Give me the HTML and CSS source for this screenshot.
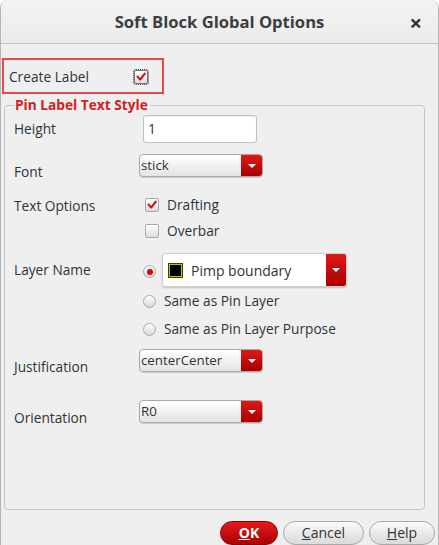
FILE: index.html
```html
<!DOCTYPE html>
<html>
<head>
<meta charset="utf-8">
<link rel="stylesheet" href="styles.css">
</head>
<body>
<div class="window">
  <div class="titlebar">
    <div class="tb-spacer"></div>
    <div class="title">Soft Block Global Options</div>
    <div class="tb-close">×</div>
  </div>
  <div class="content">
    <div class="create-row">
      <span class="lbl">Create Label</span>
      <span class="cb cb-focus"><svg viewBox="0 0 14 14" width="14" height="14"><path d="M3 6.5 L6 10 L11.5 3" fill="none" stroke="#d01010" stroke-width="2.4" stroke-linecap="round" stroke-linejoin="round"/></svg></span>
    </div>
    <fieldset class="group">
      <legend class="legend">Pin Label Text Style</legend>
      <div class="row r-height">
        <span class="lbl col-label">Height</span>
        <div class="input">1</div>
      </div>
      <div class="row r-font">
        <span class="lbl col-label low">Font</span>
        <div class="combo"><span class="combo-text">stick</span><span class="combo-btn"><span class="tri"></span></span></div>
      </div>
      <div class="row r-draft">
        <span class="lbl col-label lowish">Text Options</span>
        <span class="cb-wrap"><span class="cb"><svg viewBox="0 0 14 14" width="14" height="14"><path d="M3 6.5 L6 10 L11.5 3" fill="none" stroke="#d01010" stroke-width="2.4" stroke-linecap="round" stroke-linejoin="round"/></svg></span><span class="lbl">Drafting</span></span>
      </div>
      <div class="row r-overbar">
        <span class="col-label"></span>
        <span class="cb-wrap"><span class="cb"></span><span class="lbl">Overbar</span></span>
      </div>
      <div class="row r-layer">
        <span class="lbl col-label">Layer Name</span>
        <span class="radio on"></span>
        <div class="layer-combo">
          <span class="swatch"></span>
          <span class="layer-text">Pimp boundary</span>
          <span class="combo-btn tall"><span class="tri"></span></span>
        </div>
      </div>
      <div class="row r-same1">
        <span class="col-label"></span>
        <span class="radio"></span><span class="lbl">Same as Pin Layer</span>
      </div>
      <div class="row r-same2">
        <span class="col-label"></span>
        <span class="radio"></span><span class="lbl">Same as Pin Layer Purpose</span>
      </div>
      <div class="row r-just">
        <span class="lbl col-label low">Justification</span>
        <div class="combo"><span class="combo-text">centerCenter</span><span class="combo-btn"><span class="tri"></span></span></div>
      </div>
      <div class="row r-orient">
        <span class="lbl col-label low">Orientation</span>
        <div class="combo"><span class="combo-text">R0</span><span class="combo-btn"><span class="tri"></span></span></div>
      </div>
    </fieldset>
    <div class="buttons">
      <button class="btn btn-ok"><u>O</u>K</button>
      <button class="btn btn-cancel"><u>C</u>ancel</button>
      <button class="btn btn-help"><u>H</u>elp</button>
    </div>
  </div>
</div>
</body>
</html>
```

FILE: styles.css
```css
* { box-sizing: border-box; }
html, body {
  margin: 0;
  padding: 0;
  width: 439px;
  height: 545px;
  overflow: hidden;
  background: #ffffff;
  font-family: "Open Sans", "Noto Sans", sans-serif;
  color: #2e3436;
}
.window {
  width: 439px;
  height: 545px;
  background: #efefef;
  border-left: 1px solid #b6b6b6;
  border-right: 1px solid #b6b6b6;
  border-radius: 8px 8px 0 0;
  overflow: hidden;
  display: flex;
  flex-direction: column;
}
.titlebar {
  height: 44px;
  flex: none;
  border-bottom: 1px solid #c2c2c2;
  background: linear-gradient(#f3f3f3, #ebebeb);
  display: grid;
  grid-template-columns: 1fr auto 1fr;
  align-items: center;
}
.title {
  font-weight: 700;
  font-size: 16.6px;
  color: #3a3e40;
}
.tb-close {
  justify-self: end;
  margin-right: 16px;
  font-size: 22px;
  font-weight: 700;
  line-height: 20px;
  color: #2e3436;
}
.content {
  flex: 1;
  display: flex;
  flex-direction: column;
}
.lbl {
  font-size: 13.7px;
  line-height: 18px;
  color: #2e3436;
  white-space: nowrap;
}
.create-row {
  margin-top: 14px;
  margin-left: 1px;
  width: 162px;
  height: 36px;
  border: 2px solid #f04848;
  display: flex;
  align-items: center;
  padding-left: 5px;
  padding-top: 2px;
}
.create-row .lbl { width: 125px; }
.cb {
  width: 14px;
  height: 14px;
  border: 1px solid #a8a8a8;
  border-radius: 2px;
  background: linear-gradient(#ffffff, #dcdcdc);
  display: inline-flex;
  align-items: center;
  justify-content: center;
  flex: none;
}
.cb svg { display: block; }
.cb-focus {
  outline: 1px dotted #404040;
  outline-offset: 0px;
  border-color: #777;
}
.group {
  margin: 2px 0 0 3px;
  width: 421px;
  height: 414px;
  border: 1px solid #c6c6c6;
  border-radius: 4px;
  padding: 0 0 0 9px;
  display: flex;
  flex-direction: column;
  min-width: 0;
}
.legend {
  margin-left: 0;
  padding: 0 2px 0 1px;
  font-size: 13.7px;
  font-weight: 700;
  color: #d41e1e;
  line-height: 18px;
}
.row {
  display: flex;
  align-items: center;
  flex: none;
}
.col-label { width: 125px; flex: none; }
.col-label.low { padding-top: 12px; }
.col-label.lowish { padding-top: 3px; }
.r-height { margin-top: 1px; height: 28px; }
.r-font { margin-top: 11px; height: 23px; }
.r-draft { margin-top: 20px; height: 15px; }
.r-overbar { margin-top: 11px; height: 15px; }
.r-layer { margin-top: 15px; height: 34px; }
.r-same1 { margin-top: 6px; height: 16px; }
.r-same2 { margin-top: 12px; height: 16px; }
.r-just { margin-top: 12px; height: 23px; }
.r-orient { margin-top: 28px; height: 23px; }

.input {
  margin-left: 4px;
  width: 114px;
  height: 28px;
  background: #ffffff;
  border: 1px solid #c0c0c0;
  border-radius: 3px;
  font-size: 13.7px;
  line-height: 26px;
  padding-left: 4px;
  box-shadow: inset 0 1px 1px rgba(0,0,0,0.08);
}
.combo {
  width: 124px;
  height: 23px;
  border: 1px solid #a9a9a9;
  border-radius: 4px;
  background: linear-gradient(#ffffff, #e4e4e4);
  display: flex;
  align-items: stretch;
  overflow: hidden;
  box-shadow: 0 1px 1px rgba(0,0,0,0.15);
}
.combo-text {
  flex: 1;
  font-size: 13.3px;
  line-height: 20px;
  padding-left: 1px;
  color: #2e3436;
}
.combo-btn {
  width: 21px;
  flex: none;
  background: linear-gradient(#e01818, #a80000);
  display: flex;
  align-items: center;
  justify-content: center;
}
.tri {
  width: 0;
  height: 0;
  border-left: 4px solid transparent;
  border-right: 4px solid transparent;
  border-top: 4px solid #ffffff;
}
.cb-wrap {
  display: flex;
  align-items: center;
  gap: 8px;
  margin-left: 6px;
}
.radio {
  width: 13px;
  height: 13px;
  border-radius: 50%;
  border: 1px solid #a8a8a8;
  background: linear-gradient(#ffffff, #d8d8d8);
  flex: none;
  margin-left: 4px;
  margin-right: 8px;
  display: flex;
  align-items: center;
  justify-content: center;
}
.radio.on::after {
  content: "";
  width: 6px;
  height: 6px;
  border-radius: 50%;
  background: #e00000;
}
.r-layer .radio { margin-top: 3px; margin-right: 6px; }
.layer-combo {
  width: 185px;
  height: 34px;
  background: #ffffff;
  border: 1px solid #d0d0d0;
  border-radius: 3px;
  display: flex;
  align-items: center;
  overflow: hidden;
  box-shadow: 0 1px 2px rgba(0,0,0,0.2);
}
.swatch {
  width: 15px;
  height: 15px;
  margin-left: 5px;
  border: 2px solid #c2c200;
  outline: 1px solid #404000;
  outline-offset: -1px;
  background: #000000;
  flex: none;
}
.layer-text {
  flex: 1;
  margin-left: 8px;
  font-size: 14px;
  color: #2e3436;
}
.combo-btn.tall { width: 20px; height: 100%; }
.buttons {
  margin-top: 11px;
  display: flex;
  justify-content: flex-end;
  gap: 5px;
  padding-right: 3px;
}
.btn {
  height: 24px;
  border-radius: 12px;
  font-family: "Open Sans", "Noto Sans", sans-serif;
  font-size: 14px;
  line-height: 20px;
  padding: 0;
  border: 1px solid #a8a8a8;
  background: linear-gradient(#fafafa, #dadada);
  color: #2e3436;
}
.btn-ok {
  width: 58px;
  background: linear-gradient(#e41c1c, #a80000);
  border-color: #900000;
  color: #ffffff;
  font-weight: 700;
}
.btn-cancel { width: 81px; }
.btn-help { width: 66px; }
```
